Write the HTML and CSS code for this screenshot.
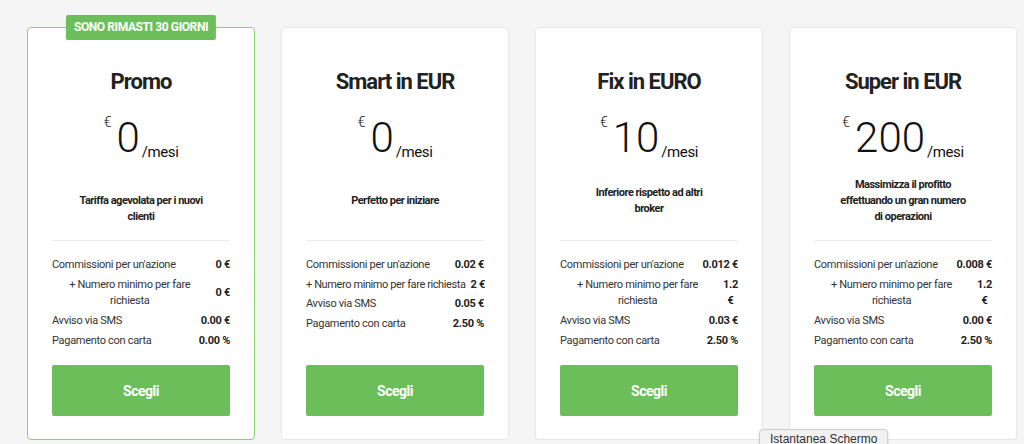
FILE: index.html
```html
<!DOCTYPE html>
<html lang="it">
<head>
    <meta charset="UTF-8">
    <meta name="viewport" content="width=device-width, initial-scale=1.0">
    <title>Tariffe</title>
    <link rel="stylesheet" href="styles.css">
</head>
<body>
    <div class="plans">
        <div class="plan plan-promo">
            <div class="plan-badge">Sono rimasti 30 giorni</div>
            <h2 class="plan-title">Promo</h2>
            <div class="plan-price"><span class="currency">€</span>0<span class="period">/mesi</span></div>
            <div class="plan-desc"><p><br>Tariffa agevolata per i nuovi clienti</p></div>
            <ul class="plan-fees">
                <li><span class="fee-label">Commissioni per un'azione</span><span class="fee-value">0 €</span></li>
                <li class="fee-min"><span class="fee-label">+ Numero minimo per fare<br>richiesta</span><span class="fee-value">0 €</span></li>
                <li><span class="fee-label">Avviso via SMS</span><span class="fee-value">0.00 €</span></li>
                <li><span class="fee-label">Pagamento con carta</span><span class="fee-value">0.00 %</span></li>
            </ul>
            <button class="plan-button">Scegli</button>
        </div>
        <div class="plan">
            <h2 class="plan-title">Smart in EUR</h2>
            <div class="plan-price"><span class="currency">€</span>0<span class="period">/mesi</span></div>
            <div class="plan-desc"><p>Perfetto per iniziare</p></div>
            <ul class="plan-fees plan-fees-tight">
                <li><span class="fee-label">Commissioni per un'azione</span><span class="fee-value">0.02 €</span></li>
                <li class="fee-inline"><span class="fee-label">+ Numero minimo per fare richiesta</span><span class="fee-value">2 €</span></li>
                <li><span class="fee-label">Avviso via SMS</span><span class="fee-value">0.05 €</span></li>
                <li><span class="fee-label">Pagamento con carta</span><span class="fee-value">2.50 %</span></li>
            </ul>
            <button class="plan-button">Scegli</button>
        </div>
        <div class="plan">
            <h2 class="plan-title">Fix in EURO</h2>
            <div class="plan-price"><span class="currency">€</span>10<span class="period">/mesi</span></div>
            <div class="plan-desc"><p>Inferiore rispetto ad altri broker</p></div>
            <ul class="plan-fees">
                <li><span class="fee-label">Commissioni per un'azione</span><span class="fee-value">0.012 €</span></li>
                <li class="fee-min"><span class="fee-label">+ Numero minimo per fare<br>richiesta</span><span class="fee-value"><span class="fee-stack">1.2<br>€</span></span></li>
                <li><span class="fee-label">Avviso via SMS</span><span class="fee-value">0.03 €</span></li>
                <li><span class="fee-label">Pagamento con carta</span><span class="fee-value">2.50 %</span></li>
            </ul>
            <button class="plan-button">Scegli</button>
        </div>
        <div class="plan">
            <h2 class="plan-title">Super in EUR</h2>
            <div class="plan-price"><span class="currency">€</span>200<span class="period">/mesi</span></div>
            <div class="plan-desc"><p>Massimizza il profitto effettuando un gran numero di operazioni</p></div>
            <ul class="plan-fees">
                <li><span class="fee-label">Commissioni per un'azione</span><span class="fee-value">0.008 €</span></li>
                <li class="fee-min"><span class="fee-label">+ Numero minimo per fare<br>richiesta</span><span class="fee-value"><span class="fee-stack">1.2<br>€</span></span></li>
                <li><span class="fee-label">Avviso via SMS</span><span class="fee-value">0.00 €</span></li>
                <li><span class="fee-label">Pagamento con carta</span><span class="fee-value">2.50 %</span></li>
            </ul>
            <button class="plan-button">Scegli</button>
        </div>
    </div>
    <div class="tooltip">Istantanea Schermo</div>
</body>
</html>
```

FILE: styles.css
```css
body {
    margin: 0;
    background-color: #f5f5f5;
    font-family: 'Roboto', 'Liberation Sans', sans-serif;
    color: #222;
    height: 444px;
    overflow: hidden;
}
.plans {
    display: flex;
    gap: 26px;
    padding: 27px 0 0 27px;
}
.plan {
    position: relative;
    box-sizing: border-box;
    width: 228px;
    flex-shrink: 0;
    display: flex;
    flex-direction: column;
    background-color: #fff;
    border: 1px solid #e6e6e6;
    border-radius: 4px;
    padding: 40px 24px 23px;
    text-align: center;
}
.plan-promo {
    border-color: #8ccf7c;
}
.plan-badge {
    position: absolute;
    top: -13px;
    left: 50%;
    transform: translateX(-50%);
    height: 25px;
    line-height: 25px;
    padding: 0 8px;
    background-color: #6cbe5a;
    color: #fff;
    font-size: 12px;
    font-weight: bold;
    letter-spacing: -0.4px;
    text-transform: uppercase;
    white-space: nowrap;
    border-radius: 2px;
}
.plan-title {
    margin: 0;
    font-size: 22px;
    line-height: 28px;
    font-weight: bold;
    letter-spacing: -1px;
    color: #222;
}
.plan-price {
    margin-top: 19px;
    height: 46px;
    font-weight: 300;
    font-size: 42px;
    line-height: 46px;
    color: #111;
    white-space: nowrap;
}
.plan-price .currency {
    font-size: 14px;
    line-height: 0;
    vertical-align: 25px;
    margin-right: 5px;
}
.plan-price .period {
    font-weight: normal;
    font-size: 15px;
    line-height: 0;
    letter-spacing: -0.4px;
    vertical-align: -5px;
    margin-left: 2px;
}
.plan-desc {
    margin-top: 16px;
    height: 48px;
    padding: 0 23px;
    display: flex;
    align-items: center;
    justify-content: center;
}
.plan-desc p {
    margin: 0;
    font-size: 11px;
    line-height: 16px;
    font-weight: bold;
    letter-spacing: -0.5px;
}
.plan-fees {
    list-style: none;
    margin: 15px 0 0;
    padding: 16px 0 0;
    border-top: 1px solid #ebebeb;
    display: flex;
    flex-direction: column;
    gap: 4px;
    font-size: 11px;
    line-height: 16px;
    letter-spacing: -0.3px;
}
.plan-fees-tight {
    gap: 3.5px;
}
.plan-fees li {
    display: flex;
    justify-content: space-between;
    align-items: center;
    gap: 8px;
    text-align: left;
}
.fee-label {
    color: #333;
}
.fee-min .fee-label {
    flex: 1;
    text-align: center;
}
.plan-fees .fee-inline {
    gap: 5px;
}
.fee-inline .fee-label {
    white-space: nowrap;
    letter-spacing: -0.4px;
}
.fee-value {
    font-weight: bold;
    text-align: right;
    white-space: nowrap;
}
.fee-stack {
    display: inline-block;
    text-align: center;
}
.plan-button {
    display: block;
    width: 100%;
    height: 51px;
    margin-top: auto;
    border: none;
    border-radius: 2px;
    background-color: #6cbe5a;
    color: #fff;
    font-family: inherit;
    font-size: 14px;
    font-weight: bold;
    letter-spacing: -0.5px;
    cursor: pointer;
}
.plan-fees + .plan-button {
    margin-top: 16px;
}
.plan-fees-tight + .plan-button {
    margin-top: auto;
}
.tooltip {
    position: absolute;
    left: 759px;
    top: 429px;
    padding: 2px 10px 4px;
    background-color: #f1f1f1;
    border: 1px solid #cfcfcf;
    border-radius: 4px;
    box-shadow: 0 1px 3px rgba(0, 0, 0, 0.15);
    font-family: 'Liberation Sans', sans-serif;
    font-size: 12px;
    line-height: 15px;
    color: #333;
}
```
